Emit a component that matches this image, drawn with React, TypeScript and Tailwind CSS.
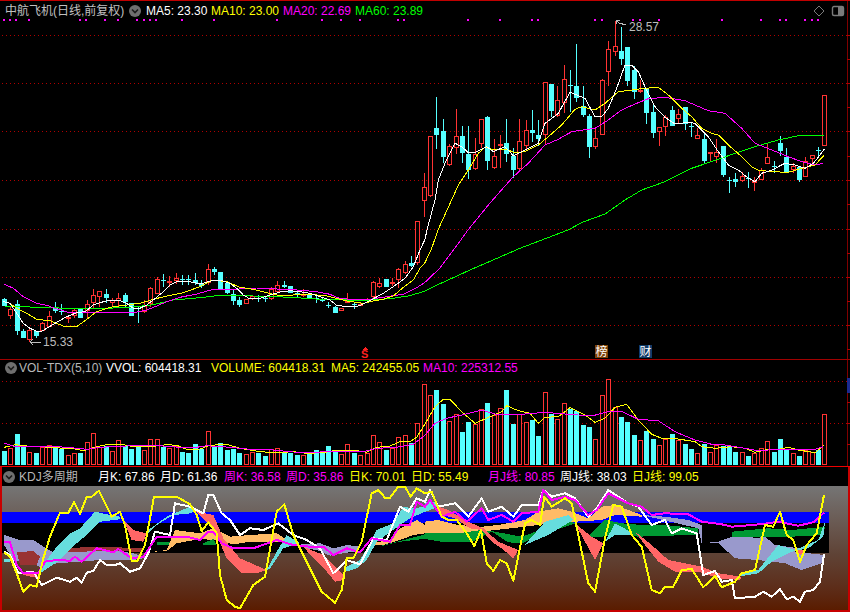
// stock chart: candles, volume and KDJ panels. Chart data is read off the picture at 3x,
// so pts()/sec() take an origin and scale it back down.
const SPACING = 6.36;
const CYAN = '#55ffff';
const RED = '#ff3333';
const GRID = '#b00000';
const cx = (i: number) => Math.round(4 + SPACING * i);

const pts = (ox: number, oy: number, s: string) =>
  s
    .split(' ')
    .map((p) => {
      const [x, y] = p.split(',').map(Number);
      return `${(ox + x / 3).toFixed(1)},${(oy + y / 3).toFixed(1)}`;
    })
    .join(' ');

type Row = [number, number, number, number, number];
const sec = (oy: number, rows: Row[]) =>
  rows.map(([red, top, bot, hi, lo]) => ({
    red: !!red,
    top: Math.round(oy + top / 3),
    bot: Math.round(oy + bot / 3),
    hi: Math.round(oy + hi / 3),
    lo: Math.round(oy + lo / 3),
  }));

const candles = [
  ...sec(270, [
    [0, 87, 107, 85, 107], [1, 117, 137, 108, 148], [0, 103, 183, 90, 195], [0, 183, 204, 178, 204],
    [1, 181, 209, 178, 217], [0, 183, 197, 183, 204], [1, 160, 182, 155, 183], [1, 137, 170, 122, 170],
    [0, 112, 122, 97, 130], [0, 124, 127, 103, 135], [1, 140, 143, 135, 158], [1, 119, 138, 115, 143],
    [0, 117, 143, 117, 143], [1, 103, 123, 90, 145], [1, 76, 100, 58, 115], [1, 64, 81, 64, 110],
    [0, 71, 84, 57, 100], [1, 90, 99, 84, 110], [1, 83, 92, 70, 108], [0, 75, 96, 70, 110],
    [0, 98, 137, 98, 137], [0, 113, 116, 112, 160], [1, 107, 127, 90, 128], [1, 55, 103, 50, 110],
    [1, 28, 71, 20, 72], [0, 29, 34, 12, 50], [1, 34, 37, 18, 50], [1, 23, 32, 10, 42],
    [0, 28, 31, 14, 45], [0, 28, 30, 14, 45], [0, 30, 38, 10, 45],
  ]),
  ...sec(200, [
    [0, 250, 258, 240, 265], [1, 208, 250, 192, 254], [0, 206, 215, 200, 225], [0, 216, 268, 216, 268],
    [0, 248, 280, 248, 282], [0, 283, 302, 270, 315], [0, 300, 314, 292, 320], [1, 298, 311, 296, 311],
    [1, 288, 298, 288, 300], [0, 293, 298, 285, 305], [0, 295, 297, 287, 305], [1, 268, 296, 262, 300],
    [1, 254, 275, 243, 278], [0, 255, 260, 243, 265], [0, 258, 280, 258, 280], [0, 280, 285, 270, 292],
    [1, 283, 287, 266, 290], [0, 285, 293, 280, 297], [0, 293, 296, 285, 308], [0, 300, 304, 290, 307],
    [0, 316, 318, 306, 324], [0, 322, 338, 318, 338], [1, 325, 334, 325, 334], [1, 304, 307, 280, 308],
    [0, 313, 315, 308, 326], [1, 313, 316, 310, 318], [1, 296, 301, 294, 310], [1, 246, 291, 243, 295],
    [1, 250, 260, 235, 265], [0, 238, 262, 238, 262], [1, 245, 250, 235, 258], [1, 208, 240, 204, 264],
    [1, 192, 220, 183, 222], [0, 190, 198, 168, 200], [1, 64, 190, 64, 195], [1, -39, 3, -81, 51],
  ]),
  ...sec(0, [
    [1, 408, 588, 408, 590], [0, 384, 405, 290, 447], [0, 393, 470, 357, 490], [1, 438, 495, 432, 497],
    [1, 408, 445, 327, 462], [0, 408, 458, 377, 490], [0, 462, 510, 378, 537], [1, 463, 507, 415, 510],
    [1, 358, 431, 358, 445], [0, 351, 483, 348, 510], [1, 468, 503, 417, 507], [1, 433, 438, 405, 503],
    [0, 430, 462, 357, 485], [0, 468, 510, 445, 535], [1, 424, 506, 357, 515], [1, 391, 437, 360, 447],
    [0, 390, 398, 330, 427], [0, 405, 417, 360, 437], [1, 247, 404, 247, 435], [0, 252, 333, 252, 352],
    [1, 301, 347, 258, 350], [1, 238, 310, 195, 340], [0, 256, 258, 210, 337], [0, 258, 293, 132, 307],
    [0, 318, 345, 258, 350], [0, 348, 440, 342, 473], [1, 415, 440, 388, 448], [1, 241, 404, 238, 405],
    [1, 148, 215, 123, 257], [1, 139, 155, 62, 168], [0, 153, 177, 82, 195], [0, 141, 243, 141, 258],
    [0, 210, 275, 197, 297], [1, 270, 272, 240, 280], [0, 268, 338, 265, 373], [0, 336, 398, 315, 413],
    [1, 382, 395, 382, 437], [1, 352, 380, 345, 408], [0, 330, 377, 318, 378], [1, 343, 358, 327, 373],
    [0, 321, 373, 321, 390], [0, 377, 380, 365, 410], [1, 406, 416, 385, 418], [0, 417, 484, 400, 492],
    [1, 457, 462, 457, 487], [1, 455, 471, 417, 490], [0, 438, 525, 438, 530], [0, 541, 543, 530, 580],
    [0, 537, 545, 520, 562], [1, 529, 544, 515, 545], [0, 535, 538, 517, 565], [1, 542, 547, 530, 572],
    [1, 509, 540, 505, 540], [1, 472, 491, 428, 492], [0, 497, 500, 482, 518], [0, 429, 453, 408, 467],
    [0, 472, 515, 445, 520], [1, 498, 511, 488, 520], [0, 500, 540, 498, 545], [1, 483, 532, 470, 532],
    [1, 466, 476, 466, 495], [0, 450, 452, 440, 475], [1, 286, 439, 286, 439],
  ]),
];

// tops of the volume bars, same candle order
const volTops = [
  ...[273, 264, 222, 255, 277, 279, 260, 256, 258, 267, 286, 279, 278, 247, 220, 260, 258, 274, 241, 259, 267, 260, 270, 238, 238, 260, 264, 257, 276, 279, 252, 268, 214, 258, 249, 270, 267, 279, 283, 276, 279, 287, 267, 265, 279, 278, 285, 285, 283, 270, 280, 258, 271, 282, 253, 279, 286, 279, 226, 247, 270, 264, 232, 226, 248, 190, 73].map((v) => 360 + v / 3),
  ...[165, 150, 192, 244, 223, 276, 246, 252, 208, 189, 225, 205, 150, 252, 222, 247, 240, 288, 157, 222, 238, 190, 206, 213, 255, 261, 298, 166, 118, 202, 231, 246, 285, 301, 273, 297, 316, 297, 282, 300, 312, 327, 340, 312, 337, 315, 318, 318, 336, 337, 348, 340, 325, 304, 336, 297, 330, 340, 348, 330, 337, 330, 223].map((v) => 340 + v / 3),
].map(Math.round);

const ma5 =
  pts(0, 270, '10,95 30,100 50,130 70,160 90,175 110,184 125,184 145,172 170,157 200,140 230,128 255,125 280,105 300,98 330,90 360,92 380,100 400,115 420,115 440,105 460,90 490,65 510,45 530,35 560,33 600,42 636,32') + ' ' +
  pts(0, 200, '660,240 690,250 710,265 730,285 750,297 780,295 810,285 840,276 870,272 900,275 930,280 960,290 990,300 1010,316 1040,320 1070,320 1090,312 1120,296 1150,280 1180,260 1215,235 1240,200 1260,150 1275,118') + ' ' +
  pts(425, 0, '6,690 30,600 40,540 60,490 90,430 110,440 130,458 150,458 185,440 205,455 240,440 265,467 290,455 340,430 360,370 400,340 435,277 480,295 510,350 530,350 550,325 575,265 600,195 620,195 640,215 660,260 690,320 720,352 750,372 790,367 810,370 850,410 880,455 910,495 940,510 970,535 990,545 1010,520 1040,510 1080,490 1110,495 1140,505 1165,490 1185,465 1198,447');
const ma10 =
  pts(0, 270, '10,95 30,100 50,115 80,130 110,148 150,152 195,170 230,170 260,148 290,125 330,112 380,105 420,100 460,88 500,78 550,68 600,50 636,30') + ' ' +
  pts(0, 200, '680,245 720,262 760,268 800,278 830,285 880,285 930,283 980,288 1010,295 1040,303 1070,307 1090,310 1120,303 1150,298 1180,288 1210,262 1240,240 1260,205 1275,188') + ' ' +
  pts(425, 0, '20,745 39,690 84,591 100,555 130,510 160,460 180,442 210,450 240,447 270,458 300,455 340,435 370,410 410,375 450,328 470,320 510,330 540,310 580,275 620,270 660,265 700,262 730,285 770,325 800,350 830,385 860,400 880,405 910,435 950,470 980,500 1000,510 1040,515 1090,517 1130,505 1170,495 1198,465');
const ma20 =
  pts(0, 200, '13,253 40,265 70,290 110,310 140,316 165,325 205,337 260,338 330,338 400,338 440,330 470,318 500,305 540,292 590,282 640,268 700,268 770,264 830,267 890,270 950,275 990,283 1020,296 1060,298 1110,298 1160,290 1210,283 1250,263 1275,247') + ' ' +
  pts(425, 0, '45,804 90,744 129,690 195,609 264,531 310,490 360,435 400,418 440,395 510,385 550,360 590,330 630,312 670,296 720,292 780,302 850,332 900,340 950,385 990,430 1040,450 1090,470 1130,485 1170,495 1195,490');
const ma60 =
  pts(0, 200, '13,318 60,320 120,322 200,325 300,325 380,323 460,314 520,300 600,293 660,286 760,288 830,290 890,293 960,298 1040,300 1110,300 1170,296 1230,287 1275,273') + ' ' +
  pts(425, 0, '15,865 135,810 285,745 429,690 474,666 540,642 600,600 650,570 720,545 800,505 880,478 930,460 990,440 1060,420 1130,405 1198,405');

const volYellow =
  pts(0, 360, '13,262 45,254 80,258 120,260 180,264 220,266 250,272 290,260 330,252 360,252 390,258 450,260 500,254 530,256 560,268 600,267 630,256 680,253 720,265 780,275 830,278 880,275 920,280 970,278 1000,272 1060,270 1100,277 1130,262 1170,258 1200,245 1230,245 1250,232 1275,192') + ' ' +
  pts(425, 340, '30,200 55,178 75,178 110,215 150,250 200,228 230,215 245,197 280,212 315,220 340,250 360,232 400,230 435,203 480,225 510,247 540,235 570,202 605,193 640,240 680,283 710,295 760,297 810,305 830,320 870,325 920,320 960,325 990,337 1020,330 1060,328 1090,322 1120,330 1170,338 1198,315');
const volMagenta =
  pts(0, 360, '13,250 40,258 90,258 140,258 200,262 260,268 300,262 380,258 450,255 540,262 590,262 620,257 690,262 750,268 820,270 880,276 920,277 1000,275 1090,275 1130,265 1190,262 1240,253 1275,226') + ' ' +
  pts(425, 340, '30,250 65,235 110,225 170,210 210,222 300,222 360,217 420,222 500,228 550,215 590,214 640,238 700,242 750,275 810,300 860,313 900,315 960,325 1000,332 1060,328 1130,330 1170,328 1195,320');

const kdjWhite =
  pts(0, 465, '12,260 30,270 55,325 100,320 125,360 170,338 210,350 230,338 245,353 260,323 280,318 300,285 320,300 345,300 360,295 390,320 420,310 445,265 465,200 510,210 525,115 570,125 610,145 625,90 640,90 665,145 690,165 720,210 750,190 790,195 835,175 880,210 920,225 960,250 1000,325 1040,285 1080,298 1120,220 1160,225 1200,125 1225,140 1250,100 1275,110') + ' ' +
  pts(425, 465, '15,75 40,125 90,115 130,155 170,100 190,140 230,125 265,155 290,120 340,120 355,75 380,95 420,85 450,100 490,155 515,130 550,75 610,115 640,125 680,180 720,165 740,205 770,190 815,205 835,330 870,318 890,350 920,345 930,400 990,395 1015,380 1040,395 1065,372 1085,403 1105,395 1125,410 1140,380 1165,375 1185,350 1197,268');
const kdjMagenta =
  pts(0, 465, '12,232 30,232 50,300 70,325 115,325 135,290 170,285 210,287 225,275 245,290 290,250 340,262 355,252 395,280 430,275 460,230 470,215 560,215 600,225 625,200 640,200 665,235 700,250 760,250 830,225 880,240 930,245 970,245 1000,270 1040,250 1080,262 1115,220 1170,230 1200,180 1230,180 1250,110 1275,125') + ' ' +
  pts(425, 465, '15,105 50,155 90,140 125,170 170,130 190,165 230,150 265,170 290,145 340,140 355,75 380,105 420,95 450,105 490,150 515,135 550,85 610,115 650,125 680,150 720,145 790,148 830,170 890,178 920,185 980,180 1030,175 1060,170 1120,182 1165,172 1197,143');
const kdjYellow =
  pts(0, 465, '12,262 30,275 50,325 70,380 90,360 110,365 130,280 150,215 180,143 205,143 222,112 240,147 260,95 275,95 297,77 335,155 360,140 375,180 395,288 412,288 435,240 462,95 530,95 570,118 590,150 605,198 625,172 650,205 660,330 680,405 705,425 720,430 760,360 795,335 830,140 853,118 880,210 930,310 965,380 1005,413 1025,375 1040,280 1060,280 1085,230 1115,85 1135,75 1155,98 1170,98 1195,65 1215,65 1232,95 1250,70 1275,85') + ' ' +
  pts(425, 465, '20,80 50,155 70,165 95,165 125,205 148,243 168,195 185,295 205,318 225,285 245,295 265,347 300,175 320,165 345,180 358,95 380,125 420,100 440,115 490,355 510,380 540,220 565,120 590,125 620,210 650,245 680,375 705,385 720,365 745,365 770,315 800,312 835,367 870,332 890,367 930,350 950,325 990,315 1020,180 1045,185 1065,140 1085,210 1105,225 1125,290 1145,240 1175,205 1197,90');

const PERI = '#9999cc';
const TEAL = '#66dddd';
const SALMON = '#ff6666';
const ORANGE = '#ffbb66';
const GREEN = '#009933';
const DARKRED = '#993333';

const bands: [string, string][] = [
  [PERI, pts(0, 465, '12,210 60,225 100,225 130,245 160,262 240,262 300,255 340,255 400,265 430,275 440,278 400,285 360,285 300,285 240,290 170,295 125,310 110,300 40,285 12,240')],
  [DARKRED, pts(0, 465, '50,262 100,258 120,275 110,300 60,300')],
  [DARKRED, pts(0, 465, '180,250 300,245 430,250 430,260 300,258 200,262')],
  [TEAL, pts(0, 465, '12,282 30,282 30,292 12,292')],
  [SALMON, pts(0, 465, '60,320 110,325 115,340 70,330')],
  [TEAL, pts(0, 465, '120,310 140,285 170,245 210,205 240,190 285,140 330,150 360,155 360,163 300,170 260,210 230,235 180,285 120,325')],
  [SALMON, pts(0, 465, '360,155 400,195 440,205 430,230 395,225 375,175')],
  [TEAL, pts(0, 465, '445,195 500,155 570,125 585,130 575,145 520,150 470,180 445,205')],
  [ORANGE, pts(0, 465, '460,260 500,255 525,195 600,205 640,190 690,215 750,210 830,205 870,230 800,230 740,232 700,238 640,225 600,222 530,235 500,258')],
  [GREEN, pts(0, 465, '470,232 510,230 505,240 470,240')],
  [GREEN, pts(0, 465, '610,235 640,222 650,240 610,240')],
  [SALMON, pts(0, 465, '585,138 640,150 670,220 720,280 800,315 770,325 725,325 680,280 650,210 620,170')],
  [PERI, pts(0, 465, '880,240 960,235 1000,250 1040,240 1080,245 1070,258 990,272 960,258 900,245')],
  [TEAL, pts(0, 465, '800,315 830,260 860,210 900,235 880,240 850,250 830,280 810,310')],
  [SALMON, pts(0, 465, '910,245 970,270 1030,330 1030,345 1005,350 980,320 940,280')],
  [ORANGE, pts(0, 465, '1110,235 1170,225 1200,190 1250,165 1275,180 1275,205 1240,210 1200,225 1150,240 1110,240')],
  [GREEN, pts(0, 465, '1140,243 1200,228 1275,208 1275,222 1240,225 1190,232 1150,242')],
  [TEAL, pts(0, 465, '1030,310 1080,285 1110,235 1130,195 1180,175 1210,125 1240,130 1275,125 1275,140 1230,160 1200,180 1130,230 1100,285 1070,310 1040,320')],
  [ORANGE, pts(425, 465, '0,170 40,165 100,180 170,185 220,180 300,165 340,140 400,130 440,140 490,160 530,125 570,120 650,150 650,155 570,150 530,165 450,170 380,175 300,185 210,195 100,210 0,205')],
  [GREEN, pts(425, 465, '0,205 100,205 170,195 210,200 290,215 360,190 440,170 490,215 540,165 590,175 650,180 720,180 820,190 820,210 720,212 640,215 590,205 530,215 500,215 450,175 350,210 290,235 250,232 200,200 140,232 60,232 0,222')],
  [TEAL, pts(425, 465, '0,110 30,110 40,125 15,135 0,140')],
  [SALMON, pts(425, 465, '40,125 70,135 130,170 175,190 220,230 280,255 265,280 230,250 200,230 170,195 135,190 90,160 50,150')],
  [TEAL, pts(425, 465, '290,250 360,170 430,150 445,165 370,210 300,240')],
  [TEAL, pts(425, 465, '540,230 570,175 600,190 625,210 570,210')],
  [SALMON, pts(425, 465, '450,175 500,215 535,235 510,285 480,230')],
  [SALMON, pts(425, 465, '630,200 680,240 730,285 830,305 880,325 950,335 945,345 880,340 820,320 750,320 700,290 660,240')],
  [PERI, pts(425, 465, '650,150 720,155 790,165 830,180 830,235 880,230 920,215 1000,218 1020,215 1050,240 1120,250 1110,260 1200,270 1190,295 1130,315 1080,295 1000,285 930,280 880,235 830,235 820,190')],
  [GREEN, pts(425, 465, '920,200 1030,190 1100,195 1200,185 1195,210 1100,215 1030,215 920,215')],
  [TEAL, pts(425, 465, '945,330 1000,315 1060,240 1110,255 1180,225 1200,170 1195,215 1150,250 1100,260 1040,290 1000,325 950,333')],
  [SALMON, pts(425, 465, '1115,255 1140,255 1125,270')],
];

const dots = [4, 10, 16, 29, 80, 86, 105, 118, 137, 144, 150, 156, 182, 214, 277, 322, 341, 360, 398, 404, 468, 500, 532, 538, 595, 602, 633, 640, 659, 722, 761, 780, 786, 805, 812, 818];
const gridMain = [35, 83, 131, 180, 229, 277, 325];
const ticksMain = [35, 59, 83, 107, 131, 156, 180, 204, 229, 253, 277, 301, 325, 349];
const gridXs = Array.from({ length: 212 }, (_, i) => 2 + i * 4);

function Line({ p, color, width = 1 }: { p: string; color: string; width?: number }) {
  return <polyline points={p} fill="none" stroke={color} strokeWidth={width} strokeLinejoin="round" />;
}

function Grid({ ys, ticks }: { ys: number[]; ticks: number[] }) {
  return (
    <g>
      {ys.map((y) =>
        gridXs.map((x) => <rect key={`${y}-${x}`} x={x} y={y} width="1" height="1" fill={GRID} />),
      )}
      <rect x="847" y="0" width="1" height="612" fill="#800000" />
      {ticks.map((y) => (
        <rect key={y} x="847" y={y} width="3" height="1" fill="#b00000" />
      ))}
    </g>
  );
}

// hollow body for an up bar: filled outline with a black inside
function Hollow({ x, top, bot }: { x: number; top: number; bot: number }) {
  const h = Math.max(bot - top, 2);
  return (
    <g>
      <rect x={x - 2} y={top} width="5" height={h} fill={RED} />
      {h > 2 && <rect x={x - 1} y={top + 1} width="3" height={h - 2} fill="#000" />}
    </g>
  );
}

function Badge() {
  return (
    <span className="flex h-3 w-3 shrink-0 items-center justify-center rounded-full bg-[#6f6f6f]">
      <svg width="8" height="6" viewBox="0 0 8 6">
        <path d="M1 1.5 L4 4.5 L7 1.5" fill="none" stroke="#1c1c1c" strokeWidth="1.6" />
      </svg>
    </span>
  );
}

function Item({ w, color, children }: { w: string; color: string; children: React.ReactNode }) {
  return <span className={`shrink-0 whitespace-nowrap ${w} ${color}`}>{children}</span>;
}

export default function App() {
  return (
    <div className="h-[612px] w-[850px] overflow-hidden bg-black text-[12px] leading-none [font-family:'Liberation_Sans','Noto_Sans_CJK_SC',sans-serif]">
      {/* price panel */}
      <div className="relative h-[360px] border-y border-t-[#c00000] border-b-[#a00000]">
        <svg className="absolute inset-0" width="850" height="358" viewBox="0 1 850 358" shapeRendering="crispEdges">
          <Grid ys={gridMain} ticks={ticksMain} />
          {dots.map((x) => (
            <rect key={x} x={x - 1} y="19" width="2" height="2" fill="#ff00ff" />
          ))}
          {candles.map((c, i) => {
            const x = cx(i);
            const color = c.red ? RED : CYAN;
            return (
              <g key={i}>
                <rect x={x} y={c.hi} width="1" height={c.lo - c.hi} fill={color} />
                {c.red ? (
                  <Hollow x={x} top={c.top} bot={c.bot} />
                ) : (
                  <rect x={x - 2} y={c.top} width="5" height={Math.max(c.bot - c.top, 1)} fill={color} />
                )}
              </g>
            );
          })}
          <Line p={ma60} color="#00ff00" />
          <Line p={ma20} color="#ff00ff" />
          <Line p={ma10} color="#ffff00" />
          <Line p={ma5} color="#ffffff" />
          <path d="M626 25 L619 23 L616 20 M616 20 L616 24 M616 20 L620 20" fill="none" stroke="#bdbdbd" />
          <path d="M41 342 L30 342 M30 342 L33 339 M30 342 L33 345" fill="none" stroke="#bdbdbd" />
          <path d="M365 347 L368 350 L362 350 Z" fill="#ff2020" />
        </svg>
        <div className="relative z-10 flex h-[20px] items-center pl-[5px]">
          <Item w="w-[124px]" color="text-[#c0c0c0]">中航飞机(日线,前复权)</Item>
          <Badge />
          <span className="w-[5px]" />
          <Item w="w-[65px]" color="text-white">MA5: 23.30</Item>
          <Item w="w-[72px]" color="text-[#ffff00]">MA10: 23.00</Item>
          <Item w="w-[72px]" color="text-[#ff00ff]">MA20: 22.69</Item>
          <Item w="w-[72px]" color="text-[#00ff00]">MA60: 23.89</Item>
          <svg className="ml-auto mr-[5px]" width="32" height="12" viewBox="0 0 32 12">
            <path d="M6 1 L11 6 L6 11 L1 6 Z" fill="none" stroke="#7a7a7a" />
            <rect x="19.5" y="1.5" width="11" height="9" rx="1.5" fill="none" stroke="#7a7a7a" strokeWidth="1.4" />
            <rect x="25" y="2" width="5" height="8" fill="#7a7a7a" />
          </svg>
        </div>
        <span className="absolute left-[629px] top-[20px] text-[#bdbdbd]">28.57</span>
        <span className="absolute left-[43px] top-[335px] text-[#bdbdbd]">15.33</span>
        <span className="absolute left-[361px] top-[348px] text-[11px] font-bold text-[#ff2020]">S</span>
        <span className="absolute left-[595px] top-[344px] flex h-[13px] w-[13px] items-center justify-center bg-[#7d4208] text-white">榜</span>
        <span className="absolute left-[639px] top-[344px] flex h-[13px] w-[13px] items-center justify-center bg-[#0f3a68] text-white">财</span>
      </div>

      {/* volume panel */}
      <div className="relative h-[107px] border-b border-b-[#f00000]">
        <svg className="absolute inset-0" width="850" height="106" viewBox="0 360 850 106" shapeRendering="crispEdges">
          <Grid ys={[381, 423]} ticks={[402, 423, 444]} />
          <rect x="847" y="378" width="3" height="15" fill="#1a2a90" />
          {volTops.map((top, i) => {
            const x = cx(i);
            return candles[i].red ? (
              <Hollow key={i} x={x} top={top} bot={465} />
            ) : (
              <rect key={i} x={x - 2} y={top} width="5" height={465 - top} fill={CYAN} />
            );
          })}
          <Line p={volYellow} color="#ffff00" />
          <Line p={volMagenta} color="#ff00ff" />
        </svg>
        <div className="relative z-10 flex h-[15px] items-center pl-[5px]">
          <Badge />
          <span className="w-[2px]" />
          <Item w="w-[87px]" color="text-[#b8b8b8]">VOL-TDX(5,10)</Item>
          <Item w="w-[105px]" color="text-white">VVOL: 604418.31</Item>
          <Item w="w-[120px]" color="text-[#ffff00]">VOLUME: 604418.31</Item>
          <Item w="w-[92px]" color="text-[#ffff00]">MA5: 242455.05</Item>
          <Item w="w-[100px]" color="text-[#ff00ff]">MA10: 225312.55</Item>
        </div>
      </div>

      {/* KDJ panel */}
      <div className="flex h-[145px] flex-col border-x-2 border-b-2 border-[#c80000]">
        <div className="flex h-[19px] items-center pl-[1px]">
          <Badge />
          <span className="w-[4px]" />
          <Item w="w-[79px]" color="text-[#b8b8b8]">KDJ多周期</Item>
          <Item w="w-[62px]" color="text-white">月K: 67.86</Item>
          <Item w="w-[64px]" color="text-white">月D: 61.36</Item>
          <Item w="w-[62px]" color="text-[#ff00ff]">周K: 36.58</Item>
          <Item w="w-[63px]" color="text-[#ff00ff]">周D: 35.86</Item>
          <Item w="w-[62px]" color="text-[#ffff00]">日K: 70.01</Item>
          <Item w="w-[77px]" color="text-[#ffff00]">日D: 55.49</Item>
          <Item w="w-[72px]" color="text-[#ff00ff]">月J线: 80.85</Item>
          <Item w="w-[72px]" color="text-white">周J线: 38.03</Item>
          <Item w="w-[72px]" color="text-[#ffff00]">日J线: 99.05</Item>
        </div>
        <div className="relative flex-1 bg-linear-to-b from-[#757575] via-[#5f4336] via-55% to-[#5a1c00]">
          <svg className="absolute inset-0" width="846" height="124" viewBox="2 486 846 124" shapeRendering="crispEdges">
            <rect x="2" y="512" width="827" height="11" fill="#0000ff" />
            <rect x="2" y="523" width="827" height="30" fill="#000" />
            {bands.map(([fill, p], i) => (
              <polygon key={i} points={p} fill={fill} />
            ))}
            <Line p={kdjWhite} color="#ffffff" width={2} />
            <Line p={kdjMagenta} color="#ff00ff" width={2} />
            <Line p={kdjYellow} color="#ffff00" width={2} />
          </svg>
        </div>
      </div>
    </div>
  );
}
